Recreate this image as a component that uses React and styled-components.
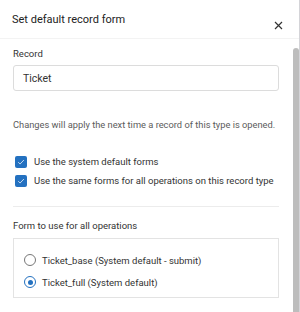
import styled, { createGlobalStyle } from 'styled-components'

const GlobalStyle = createGlobalStyle`
  html, body {
    margin: 0;
    padding: 0;
    overflow: hidden;
    background: #d4d4d8;
  }
  body {
    font-family: Roboto, "Liberation Sans", sans-serif;
  }
`

const Panel = styled.div`
  width: 299px;
  height: 100vh;
  background: #fff;
  display: flex;
  flex-direction: column;
  overflow: hidden;
`

const Header = styled.div`
  height: 39px;
  box-sizing: border-box;
  border-bottom: 1px solid #f3f3f3;
  display: flex;
  justify-content: space-between;
  align-items: flex-start;
  padding: 12px 16px 0 12px;
  flex-shrink: 0;
`

const Title = styled.h2`
  margin: 0;
  font-size: 11px;
  line-height: 16px;
  font-weight: 400;
  color: #222;
`

const CloseButton = styled.button`
  border: none;
  background: none;
  padding: 0;
  margin-top: 8px;
  width: 10px;
  height: 10px;
  display: flex;
  align-items: center;
  justify-content: center;
  cursor: pointer;
`

const Body = styled.div`
  flex: 1;
  display: flex;
  overflow: hidden;
`

const Content = styled.div`
  flex: 1;
  padding: 9px 14px 0 13px;
  display: flex;
  flex-direction: column;
`

const ScrollTrack = styled.div`
  width: 6px;
  flex-shrink: 0;
  padding-top: 9px;
  display: flex;
  flex-direction: column;
`

const Thumb = styled.div`
  flex: 1;
  background: #bdbdbd;
  border-radius: 3px 3px 0 0;
`

const Label = styled.div`
  font-size: 9.5px;
  line-height: 12px;
  color: #333;
  margin-top: ${p => p.$top || 0}px;
`

const Input = styled.div`
  margin-top: 5px;
  height: 26px;
  box-sizing: border-box;
  border: 1px solid #dcdcdc;
  border-radius: 3px;
  display: flex;
  align-items: center;
  padding-left: 9px;
  font-size: 10.5px;
  color: #333;
`

const Hint = styled.p`
  margin: 28px 0 0;
  font-size: 9.3px;
  line-height: 12px;
  color: #5c5c5c;
  white-space: nowrap;
`

const CheckList = styled.div`
  margin-top: 21px;
  display: flex;
  flex-direction: column;
`

const CheckRow = styled.label`
  height: 19px;
  display: flex;
  align-items: center;
  gap: 7px;
  padding-left: 2px;
  font-size: 9.5px;
  color: #333;
`

const Box = styled.span`
  width: 12px;
  height: 12px;
  border-radius: 2px;
  background: #2471c0;
  display: flex;
  align-items: center;
  justify-content: center;
  flex-shrink: 0;
`

const Divider = styled.hr`
  margin: 16px 0 0;
  border: none;
  border-top: 1px solid #ececec;
`

const RadioGroup = styled.div`
  margin-top: 6px;
  height: 60px;
  box-sizing: border-box;
  border: 1px solid #e3e3e3;
  padding: 10px 10px 4px;
  display: flex;
  flex-direction: column;
`

const RadioRow = styled.label`
  height: 22px;
  display: flex;
  align-items: center;
  gap: 6px;
  font-size: 9.5px;
  color: #333;
`

const Radio = styled.span`
  width: 12px;
  height: 12px;
  box-sizing: border-box;
  border-radius: 50%;
  border: 1px solid ${p => (p.$checked ? '#2471c0' : '#777')};
  display: flex;
  align-items: center;
  justify-content: center;
  flex-shrink: 0;

  &::after {
    content: '';
    width: 5px;
    height: 5px;
    border-radius: 50%;
    background: ${p => (p.$checked ? '#2471c0' : 'transparent')};
  }
`

const Check = () => (
  <svg width="8" height="8" viewBox="0 0 8 8">
    <path d="M1.2 4.2 L3.1 6 L6.9 2" fill="none" stroke="#d5e4f6" strokeWidth="0.9" />
  </svg>
)

const App = () => {
  const options = [
    { label: 'Ticket_base (System default - submit)', checked: false },
    { label: 'Ticket_full (System default)', checked: true },
  ]

  return (
    <>
      <GlobalStyle />
      <Panel>
        <Header>
          <Title>Set default record form</Title>
          <CloseButton aria-label="Close">
            <svg width="9" height="9" viewBox="0 0 9 9">
              <path d="M1 1 L8 8 M8 1 L1 8" stroke="#333" strokeWidth="1.2" />
            </svg>
          </CloseButton>
        </Header>
        <Body>
          <Content>
            <Label>Record</Label>
            <Input>Ticket</Input>
            <Hint>Changes will apply the next time a record of this type is opened.</Hint>
            <CheckList>
              <CheckRow>
                <Box><Check /></Box>
                Use the system default forms
              </CheckRow>
              <CheckRow>
                <Box><Check /></Box>
                Use the same forms for all operations on this record type
              </CheckRow>
            </CheckList>
            <Divider />
            <Label $top={13}>Form to use for all operations</Label>
            <RadioGroup>
              {options.map(o => (
                <RadioRow key={o.label}>
                  <Radio $checked={o.checked} />
                  {o.label}
                </RadioRow>
              ))}
            </RadioGroup>
          </Content>
          <ScrollTrack>
            <Thumb />
          </ScrollTrack>
        </Body>
      </Panel>
    </>
  )
}

export default App
